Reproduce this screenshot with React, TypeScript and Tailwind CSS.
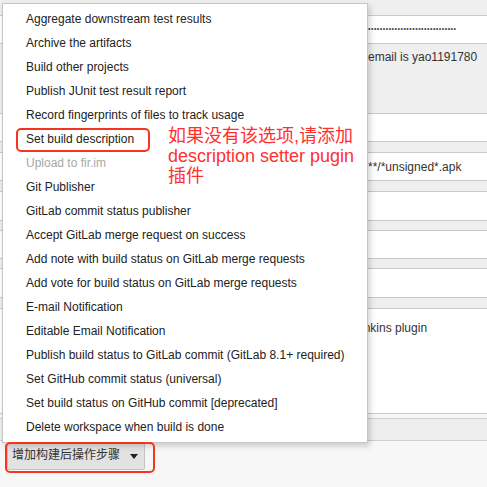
import React from 'react';

const menuItems: { label: string; disabled?: boolean }[] = [
  { label: 'Aggregate downstream test results' },
  { label: 'Archive the artifacts' },
  { label: 'Build other projects' },
  { label: 'Publish JUnit test result report' },
  { label: 'Record fingerprints of files to track usage' },
  { label: 'Set build description' },
  { label: 'Upload to fir.im', disabled: true },
  { label: 'Git Publisher' },
  { label: 'GitLab commit status publisher' },
  { label: 'Accept GitLab merge request on success' },
  { label: 'Add note with build status on GitLab merge requests' },
  { label: 'Add vote for build status on GitLab merge requests' },
  { label: 'E-mail Notification' },
  { label: 'Editable Email Notification' },
  { label: 'Publish build status to GitLab commit (GitLab 8.1+ required)' },
  { label: 'Set GitHub commit status (universal)' },
  { label: 'Set build status on GitHub commit [deprecated]' },
  { label: 'Delete workspace when build is done' },
];

const Field: React.FC<{ h: string; children?: React.ReactNode }> = ({ h, children }) => (
  <div className={`${h} bg-white border-y border-[#c9c9c9] flex items-center text-[12px] text-[#333]`}>
    {children}
  </div>
);

const App: React.FC = () => {
  return (
    <div
      className="relative w-[487px] h-[487px] overflow-hidden bg-[#f7f7f7]"
      style={{ fontFamily: '"Liberation Sans", "Noto Sans CJK SC", sans-serif' }}
    >
      {/* form behind the dropdown */}
      <div className="flex flex-col">
        <div className="h-[15px] bg-[#efefef]" />
        <Field h="h-[29px]">
          <span className="pl-[368px] text-[7px] tracking-[0.5px] text-[#444] whitespace-nowrap">
            ••••••••••••••••••••••••••••••
          </span>
        </Field>
        <div className="h-[69px] bg-[#efefef] pt-[5px] pl-[368px] text-[12px] leading-[16px] text-[#333] whitespace-nowrap">
          email is yao1191780
        </div>
        <Field h="h-[29px]" />
        <div className="h-[10px] bg-[#efefef]" />
        <Field h="h-[29px]">
          <span className="pl-[368px] whitespace-nowrap">**/*unsigned*.apk</span>
        </Field>
        <div className="h-[10px] bg-[#efefef]" />
        <Field h="h-[30px]" />
        <div className="h-[9px] bg-[#efefef]" />
        <Field h="h-[29px]" />
        <div className="h-[9px] bg-[#efefef]" />
        <Field h="h-[30px]" />
        <div className="h-[10px] bg-[#efefef]" />
        <div className="h-[106px] bg-white border-y border-[#c9c9c9] pt-[11px] pl-[351px] text-[12px] leading-[16px] text-[#333] whitespace-nowrap">
          Jenkins plugin
        </div>
        <div className="h-[4px] bg-[#f7f7f7]" />
        <div className="h-[23px] bg-[#eeeeee] border-y border-[#cfcfcf]" />
        <div className="pl-[7px]">
          <button className="h-[30px] w-[138px] -mt-[1px] flex items-center pl-[4px] bg-[#e2e2e2] border border-[#c4c4c4] rounded-[2px] text-[12px] text-[#333]">
            <span>增加构建后操作步骤</span>
            <svg className="ml-[10px] mt-[2px]" width="8" height="5" viewBox="0 0 8 5">
              <path d="M0 0 L8 0 L4 5 Z" fill="#222" />
            </svg>
          </button>
        </div>
      </div>

      {/* dropdown menu */}
      <div className="absolute left-[2px] top-[3px] w-[366px] bg-white border border-[#c6c6c6] shadow-[2px_3px_6px_rgba(0,0,0,0.18)] pt-[3px] pb-[3px]">
        {menuItems.map((item) => (
          <div
            key={item.label}
            className={`h-[24px] leading-[24px] pl-[23px] text-[12px] whitespace-nowrap ${
              item.disabled ? 'text-[#a8a8a8]' : 'text-[#222]'
            }`}
          >
            {item.label}
          </div>
        ))}
      </div>

      {/* annotations */}
      <div className="absolute left-[16px] top-[128px] w-[134px] h-[24px] border-2 border-[#f5331f] rounded-[5px]" />
      <div className="absolute left-[168px] top-[126px] text-[18px] leading-[20px] text-[#ff3030] whitespace-nowrap">
        <div>如果没有该选项,请添加</div>
        <div>description setter pugin</div>
        <div>插件</div>
      </div>
      <div className="absolute left-[5px] top-[442px] w-[150px] h-[31px] border-2 border-[#f5331f] rounded-[5px]" />
    </div>
  );
};

export default App;
